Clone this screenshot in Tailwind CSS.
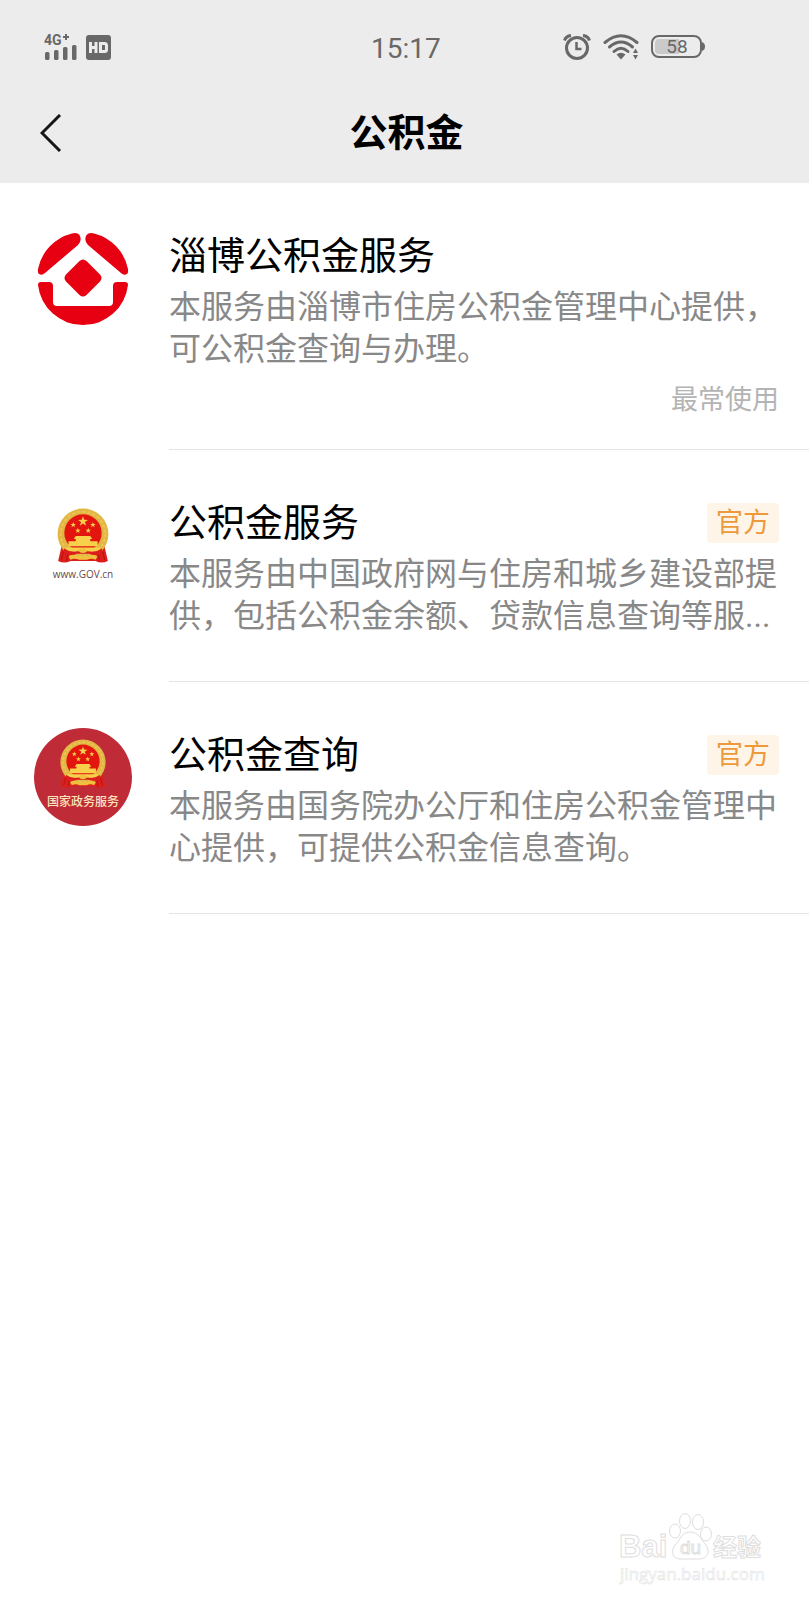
<!DOCTYPE html>
<html lang="zh-CN">
<head>
    <meta charset="UTF-8">
    <meta name="viewport" content="width=device-width, initial-scale=1.0">
    <title>公积金</title>
    <script src="https://cdn.jsdelivr.net/npm/@tailwindcss/browser@4"></script>
</head>
<body class="bg-white font-['Roboto','Noto_Sans_CJK_SC',sans-serif] text-black">
    <!-- Shared national emblem -->
    <svg class="hidden">
        <symbol id="emblem" viewBox="0 0 52 54">
            <path d="M6 34 L2 51 Q8 54 14 51 L38 51 Q44 54 50 51 L46 34Z" fill="#dc1f1c"/>
            <circle cx="26" cy="25" r="24.5" fill="#e3b743"/>
            <circle cx="26" cy="25" r="21.5" fill="none" stroke="#ecc75c" stroke-width="1.5" stroke-dasharray="3 2"/>
            <circle cx="26" cy="24" r="18" fill="#e3150f"/>
            <g fill="#f7d04c">
                <path id="star" d="M26 8 L27.2 11.4 L30.8 11.5 L27.9 13.6 L29 17 L26 15 L23 17 L24.1 13.6 L21.2 11.5 L24.8 11.4Z"/>
                <use href="#star" transform="translate(2 9) scale(.56)"/>
                <use href="#star" transform="translate(21 9) scale(.56)"/>
                <use href="#star" transform="translate(6.5 14.5) scale(.56)"/>
                <use href="#star" transform="translate(16.5 14.5) scale(.56)"/>
                <path d="M19 27h14l2 3h-2v2h7v5H12v-5h7v-2h-2z"/>
                <path d="M9 38h34l-2 4H11z"/>
            </g>
            <path d="M8 39 Q16 45 26 40 Q36 45 44 39 L46 44 Q36 47 32 44 L20 44 Q16 47 6 44Z" fill="#dc1f1c"/>
            <path d="M21 41 Q26 37 31 41 Q26 46 21 41Z M12 47 Q17 43 22 47 L30 47 Q35 43 40 47 L38 50 Q34 48 30 50 L22 50 Q18 48 14 50Z" fill="#f0c13c"/>
            <path d="M7 42 L5 50 M45 42 L47 50 M11 45 L10 51 M41 45 L42 51" stroke="#b5120f" fill="none"/>
        </symbol>
    </svg>

    <div class="min-h-screen flex flex-col">
        <!-- Header -->
        <header class="bg-[#ececec]">
            <div class="grid grid-cols-3 items-center h-[94px] pl-11 pr-[104px] text-[#686868]">
                <div class="flex items-center gap-2">
                    <svg class="w-[34px] h-8" viewBox="0 0 34 32" fill="#686868">
                        <text x="0" y="14" font-size="14" font-weight="700" font-family="Roboto, sans-serif">4G</text>
                        <path d="M19 5h2v-2h2v2h2v2h-2v2h-2v-2h-2z"/>
                        <rect x="1" y="21" width="4.5" height="8" rx="1.5"/>
                        <rect x="10" y="19" width="4.5" height="10" rx="1.5"/>
                        <rect x="19" y="16" width="4.5" height="13" rx="1.5"/>
                        <rect x="28" y="14" width="4.5" height="15" rx="1.5"/>
                    </svg>
                    <svg class="w-[25px] h-[25px]" viewBox="0 0 25 25">
                        <rect width="25" height="25" rx="3" fill="#686868"/>
                        <path d="M4.5 7v11M10 7v11M4 12.5h6" stroke="#ececec" stroke-width="3" fill="none"/>
                        <path d="M14.5 8.5h4q2 0 2 2v4q0 2-2 2h-4z" stroke="#ececec" stroke-width="3" fill="none"/>
                    </svg>
                </div>
                <time class="pt-1 pr-11 text-[28px] leading-9 text-right">15:17</time>
                <div class="flex items-center justify-end gap-3">
                    <svg class="w-7 h-7" viewBox="0 0 28 28" fill="none" stroke="#686868">
                        <circle cx="14" cy="15" r="10.5" stroke-width="3"/>
                        <path d="M13.5 9v7h5" stroke-width="2.5"/>
                        <path d="M1.5 7.5Q3 3 8 2.5M26.5 7.5Q25 3 20 2.5" stroke-width="3"/>
                    </svg>
                    <svg class="w-9 h-7" viewBox="0 0 36 28" fill="none" stroke="#686868" stroke-width="3" stroke-linecap="round">
                        <path d="M2 9.5Q18 -4 34 9.5"/>
                        <path d="M6.5 14Q18 4 29.5 14"/>
                        <path d="M11 18.5Q18 12 25 18.5"/>
                        <path d="M13.5 21.5Q18 18 22.5 21.5L18 26.5Z" fill="#686868" stroke="none"/>
                        <path d="M30 20l2.5-4.5 2.5 4.5zM30 22l2.5 4.5 2.5-4.5z" fill="#686868" stroke="none"/>
                    </svg>
                    <svg class="w-[54px] h-6" viewBox="0 0 54 24">
                        <rect x="1" y="1" width="49" height="21" rx="7" fill="none" stroke="#686868" stroke-width="2"/>
                        <path d="M8 4h20v15H8q-4 0-4-4V8q0-4 4-4z" fill="#cacaca"/>
                        <path d="M51 7q3 1 3 4.5t-3 4.5z" fill="#686868"/>
                        <text x="26" y="18" font-size="19" text-anchor="middle" font-family="Roboto, sans-serif" fill="#686868">58</text>
                    </svg>
                </div>
            </div>
            <div class="grid grid-cols-[1fr_auto_1fr] items-center h-[89px] pl-10 pr-9 pb-3">
                <button type="button" aria-label="返回" class="justify-self-start">
                    <svg class="w-6 h-[38px]" viewBox="0 0 24 38" fill="none" stroke="#161616" stroke-width="3">
                        <path d="M20 1L2 19l18 18"/>
                    </svg>
                </button>
                <h1 class="text-[38px] leading-[48px] font-bold">公积金</h1>
            </div>
        </header>

        <!-- Service list -->
        <main>
            <a href="#" class="flex pl-[34px]">
                <svg class="w-[98px] h-[98px] mt-[46px] mr-[37px] shrink-0" viewBox="0 0 98 98" fill="#e60012">
                    <path d="M38 4.500 Q44 3 46 7 Q48 12 44 16 L11 44 Q8 47 5 45 Q3.500 44 4 40 A46 46 0 0 1 38 4.500Z"/>
                    <path d="M60 4.500 Q54 3 52 7 Q50 12 54 16 L87 44 Q90 47 93 45 Q94.500 44 94 40 A46 46 0 0 0 60 4.500Z"/>
                    <path d="M45.500 32 Q49 29 52.500 32 L66 45.500 Q69 49 66 52.500 L52.500 66 Q49 69 45.500 66 L32 52.500 Q29 49 32 45.500Z"/>
                    <path d="M7 53 H15 Q19 53 19 57 V73 Q19 77 23 77 H75 Q79 77 79 73 V57 Q79 53 83 53 H91 Q94 53 94 56 A45.300 45.300 0 0 1 4 56 Q4 53 7 53Z"/>
                </svg>
                <div class="flex-1 pt-12 pb-[31px] pr-[30px] border-b border-[#e4e4e4]">
                    <h2 class="text-[38px] leading-[50px]">淄博公积金服务</h2>
                    <p class="mt-[5px] text-[32px] leading-[42px] text-[#888888]">本服务由淄博市住房公积金管理中心提供，可公积金查询与办理。</p>
                    <p class="mt-3 text-[27px] leading-9 text-[#b4b4b4] text-right">最常使用</p>
                </div>
            </a>

            <a href="#" class="flex pl-[34px]">
                <svg class="w-[98px] h-[98px] mt-[46px] mr-[37px] shrink-0" viewBox="0 0 98 98">
                    <use href="#emblem" x="22" y="12" width="54" height="56"/>
                    <text x="49" y="82" font-size="10" text-anchor="middle" font-family="Open Sans, sans-serif" fill="#6b4a4a">www.GOV.cn</text>
                </svg>
                <div class="flex-1 pt-12 pb-11 pr-[30px] border-b border-[#e4e4e4]">
                    <div class="flex justify-between items-center">
                        <h2 class="text-[38px] leading-[50px]">公积金服务</h2>
                        <span class="px-[9px] text-[27px] leading-10 rounded bg-[#fff4e8] text-[#ec9a3c]">官方</span>
                    </div>
                    <p class="mt-[5px] text-[32px] leading-[42px] text-[#888888]">本服务由中国政府网与住房和城乡建设部提供，包括公积金余额、贷款信息查询等服...</p>
                </div>
            </a>

            <a href="#" class="flex pl-[34px]">
                <svg class="w-[98px] h-[98px] mt-[46px] mr-[37px] shrink-0" viewBox="0 0 98 98">
                    <circle cx="49" cy="49" r="49" fill="#bf2b37"/>
                    <use href="#emblem" x="25" y="11" width="48" height="50"/>
                    <text x="49" y="78" font-size="12" text-anchor="middle" font-family="Noto Sans CJK SC, sans-serif" font-weight="500" fill="#fbe3b9">国家政务服务</text>
                </svg>
                <div class="flex-1 pt-12 pb-11 pr-[30px] border-b border-[#e4e4e4]">
                    <div class="flex justify-between items-center">
                        <h2 class="text-[38px] leading-[50px]">公积金查询</h2>
                        <span class="px-[9px] text-[27px] leading-10 rounded bg-[#fff4e8] text-[#ec9a3c]">官方</span>
                    </div>
                    <p class="mt-[5px] text-[32px] leading-[42px] text-[#888888]">本服务由国务院办公厅和住房公积金管理中心提供，可提供公积金信息查询。</p>
                </div>
            </a>
        </main>

        <!-- Watermark -->
        <footer class="mt-auto flex justify-end pr-10 pb-3">
            <svg class="w-[150px] h-[78px]" viewBox="0 0 150 78" fill="#ffffff" stroke="#dedede">
                <g font-family="Liberation Sans, sans-serif" font-weight="700">
                    <text x="0" y="47" font-size="31">Bai</text>
                    <ellipse cx="56" cy="21" rx="5.5" ry="7"/>
                    <ellipse cx="66" cy="11" rx="5.5" ry="7.5"/>
                    <ellipse cx="79" cy="12" rx="5.5" ry="7.5"/>
                    <ellipse cx="87" cy="24" rx="5.5" ry="7"/>
                    <path d="M71 22C80 22 82 30 87 35C92 43 87 50 78 49H63C54 50 51 42 56 35C61 31 62 22 71 22Z"/>
                    <text x="61" y="44" font-size="19" font-weight="400">du</text>
                    <text x="94" y="46" font-size="24" font-family="Noto Sans CJK SC, sans-serif">经验</text>
                </g>
                <text x="1" y="70" font-size="17" stroke-width=".5" font-family="Open Sans, sans-serif">jingyan.baidu.com</text>
            </svg>
        </footer>
    </div>
</body>
</html>
